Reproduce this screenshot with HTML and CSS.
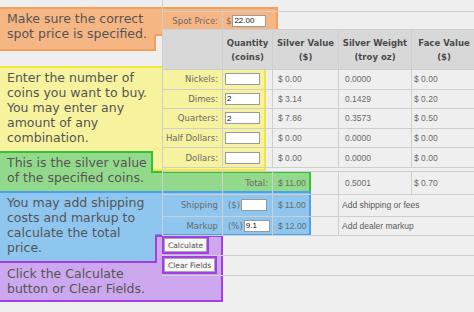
FILE: index.html
```html
<!DOCTYPE html>
<html lang="en">
<head>
  <meta charset="UTF-8">
  <title>Silver Coin Calculator</title>
  <link rel="stylesheet" href="styles.css">
</head>
<body>

  <!-- callout shapes, drawn under the table -->
  <svg class="marks" width="474" height="312" viewBox="0 0 474 312">
    <polygon class="m-orange" points="-2,8 277,8 277,35 155,35 155,50 -2,50"/>
    <polygon class="m-yellow" points="-2,67 265,67 265,170 152,170 152,152 -2,152"/>
    <polygon class="m-green" points="-2,152 152,152 152,172 310,172 310,192 -2,192"/>
    <polygon class="m-blue" points="-2,192 310,192 310,235 156,235 156,262 -2,262"/>
    <polygon class="m-purple" points="156,236 222,236 222,301 -2,301 -2,262 156,262"/>
  </svg>

  <table class="calc">
    <colgroup>
      <col class="c-label">
      <col class="c-qty">
      <col class="c-value">
      <col class="c-weight">
      <col class="c-face">
    </colgroup>
    <tr class="row-top"><td colspan="5"></td></tr>
    <tr class="row-spot">
      <td class="label">Spot Price:</td>
      <td colspan="4" class="spot">$<input type="text" class="box box-spot" value="22.00"></td>
    </tr>
    <tr class="row-head">
      <th></th>
      <th>Quantity<br>(coins)</th>
      <th>Silver Value<br>($)</th>
      <th>Silver Weight<br>(troy oz)</th>
      <th>Face Value<br>($)</th>
    </tr>
    <tr class="row-coin">
      <td class="label">Nickels:</td>
      <td class="qty"><input type="text" class="box"></td>
      <td class="val v-value">$ 0.00</td>
      <td class="val v-weight">0.0000</td>
      <td class="val v-face">$ 0.00</td>
    </tr>
    <tr class="row-coin">
      <td class="label">Dimes:</td>
      <td class="qty"><input type="text" class="box" value="2"></td>
      <td class="val v-value">$ 3.14</td>
      <td class="val v-weight">0.1429</td>
      <td class="val v-face">$ 0.20</td>
    </tr>
    <tr class="row-coin">
      <td class="label">Quarters:</td>
      <td class="qty"><input type="text" class="box" value="2"></td>
      <td class="val v-value">$ 7.86</td>
      <td class="val v-weight">0.3573</td>
      <td class="val v-face">$ 0.50</td>
    </tr>
    <tr class="row-coin">
      <td class="label">Half Dollars:</td>
      <td class="qty"><input type="text" class="box"></td>
      <td class="val v-value">$ 0.00</td>
      <td class="val v-weight">0.0000</td>
      <td class="val v-face">$ 0.00</td>
    </tr>
    <tr class="row-coin">
      <td class="label">Dollars:</td>
      <td class="qty"><input type="text" class="box"></td>
      <td class="val v-value">$ 0.00</td>
      <td class="val v-weight">0.0000</td>
      <td class="val v-face">$ 0.00</td>
    </tr>
    <tr class="row-gap"><td colspan="5"></td></tr>
    <tr class="row-total">
      <td></td>
      <td class="label">Total:</td>
      <td class="val v-value">$ 11.00</td>
      <td class="val v-weight">0.5001</td>
      <td class="val v-face">$ 0.70</td>
    </tr>
    <tr class="row-extra">
      <td class="label">Shipping</td>
      <td class="qty unit">($)<input type="text" class="box box-small"></td>
      <td class="val v-value">$ 11.00</td>
      <td colspan="2" class="note-cell">Add shipping or fees</td>
    </tr>
    <tr class="row-extra">
      <td class="label">Markup</td>
      <td class="qty unit">(%)<input type="text" class="box box-small" value="9.1"></td>
      <td class="val v-value">$ 12.00</td>
      <td colspan="2" class="note-cell">Add dealer markup</td>
    </tr>
    <tr class="row-btn">
      <td colspan="5"><button class="btn">Calculate</button></td>
    </tr>
    <tr class="row-btn">
      <td colspan="5"><button class="btn">Clear Fields</button></td>
    </tr>
  </table>

  <div class="note n-orange">Make sure the correct<br>spot price is specified.</div>
  <div class="note n-yellow">Enter the number of<br>coins you want to buy.<br>You may enter any<br>amount of any<br>combination.</div>
  <div class="note n-green">This is the silver value<br>of the specified coins.</div>
  <div class="note n-blue">You may add shipping<br>costs and markup to<br>calculate the total<br>price.</div>
  <div class="note n-purple">Click the Calculate<br>button or Clear Fields.</div>

</body>
</html>
```

FILE: styles.css
```css
body {
  margin: 0;
  width: 474px;
  height: 312px;
  overflow: hidden;
  position: relative;
  background: #efefef;
  font-family: "DejaVu Sans", Verdana, sans-serif;
}

.calc {
  position: relative;
  z-index: 1;
  margin-left: 162px;
  width: 314px;
  border-collapse: collapse;
  table-layout: fixed;
}

.c-label { width: 60px; }
.c-qty { width: 50px; }
.c-value { width: 66px; }
.c-weight { width: 73px; }
.c-face { width: 65px; }

.calc td, .calc th {
  border: 1px solid #cfcfcf;
  padding: 0;
  font-size: 8.5px;
  color: #6a6a6a;
  white-space: nowrap;
}

.row-top td {
  height: 11px;
  border-top: none;
}

.row-spot td { height: 17px; }

.row-head th {
  height: 39px;
  background: #d8d8d8;
  font-weight: bold;
  color: #4a4a4a;
  line-height: 14px;
}

.row-coin td { height: 18.6px; }
.row-gap td { height: 3px; }
.row-total td { height: 22px; }
.row-extra td { height: 21px; }
.row-extra + .row-extra td { height: 18px; }
.row-btn td { height: 19px; padding-left: 1px; }

.label {
  text-align: right;
  padding-right: 4px !important;
}

.spot {
  padding-left: 3px !important;
  color: #777;
}

.qty { padding-left: 2px !important; }
.unit { padding-left: 5px !important; }

.box {
  width: 35px;
  height: 12px;
  box-sizing: border-box;
  margin: 0;
  padding: 0 1px;
  border: 1px solid #9a9a9a;
  background: #fff;
  font-family: "Liberation Sans", Arial, sans-serif;
  font-size: 8px;
  color: #111;
  vertical-align: middle;
}

.box-spot { width: 34px; margin-left: 1px; }
.box-small { width: 26px; margin-left: 1px; }

.val {
  font-family: "Liberation Sans", Arial, sans-serif;
  font-size: 7.5px;
  color: #8a8a8a;
}

.v-value { padding-left: 5px !important; }
.v-weight { padding-left: 6px !important; }
.v-face { padding-left: 2px !important; }

.note-cell {
  padding-left: 3px !important;
  font-family: "Liberation Sans", Arial, sans-serif;
  font-size: 10px;
  color: #5a5a5a !important;
}

.btn {
  margin: 0;
  padding: 0 3px;
  height: 14px;
  border: 1px solid #a8a8a8;
  background: #f6f6f6;
  font-family: "DejaVu Sans", Verdana, sans-serif;
  font-size: 7.5px;
  color: #555;
  outline: 2px solid #a23ee4;
  vertical-align: middle;
}

/* annotation layer */
.marks {
  position: absolute;
  top: 0;
  left: 0;
  z-index: 0;
  pointer-events: none;
}

.marks polygon { stroke-width: 2; }
.m-orange { fill: #f6b684; stroke: #f2a05a; }
.m-yellow { fill: #f6f29e; stroke: #f3e63e; }
.m-green { fill: #93d98b; stroke: #34c234; }
.m-blue { fill: #8ec6f0; stroke: #4aa3ea; }
.m-purple { fill: #cda8ee; stroke: #a23ee4; }

.note {
  position: absolute;
  z-index: 2;
  left: 7px;
  font-size: 12.5px;
  line-height: 15px;
  color: #555;
  white-space: nowrap;
}

.n-orange { top: 11px; }
.n-yellow { top: 70px; }
.n-green { top: 155px; }
.n-blue { top: 195px; }
.n-purple { top: 266px; }
```
